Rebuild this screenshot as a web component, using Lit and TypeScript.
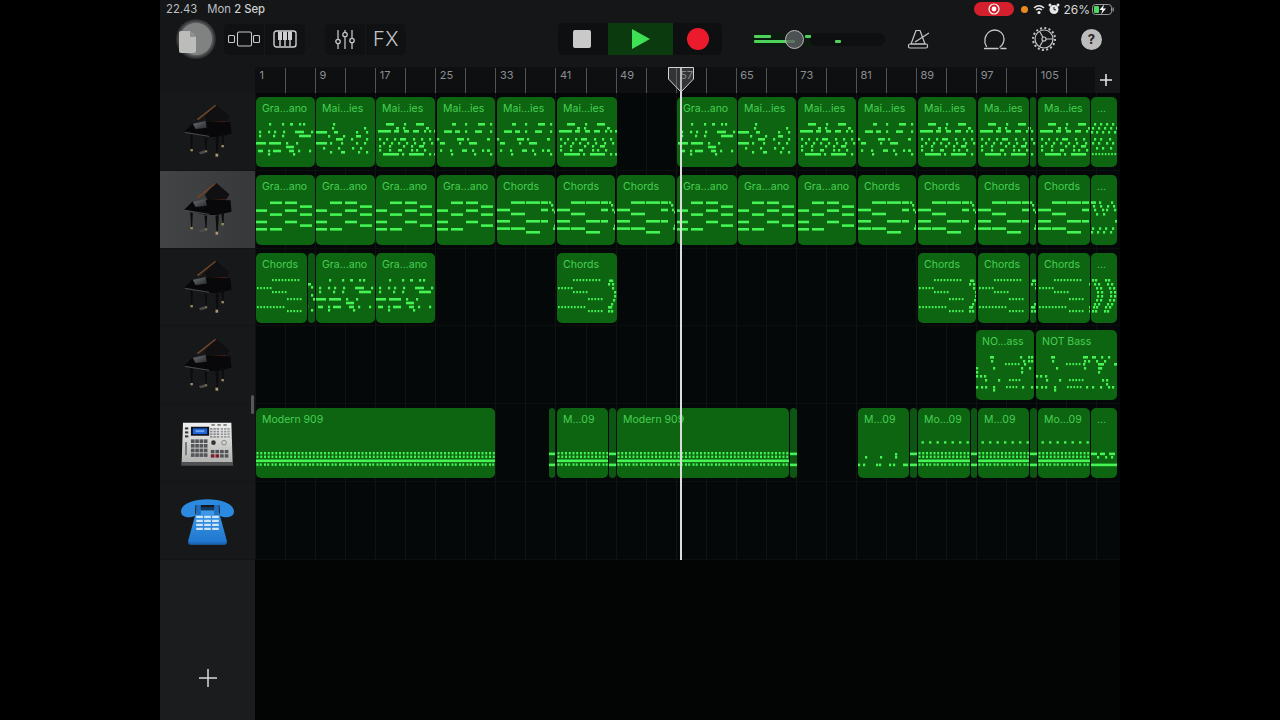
import { LitElement, html, css, svg } from "lit";
import { customElement } from "lit/decorators.js";

type Note = { x: number; y: number; w: number; h: number };
const H = 2.6;

// "10-18 28 40-48" => dash from 10 to 18, single dots at 28, dash 40 to 48
function row(y: number, spec: string, h = H, dot = 2.2): Note[] {
  return spec.split(" ").filter(Boolean).map((s) => {
    const [a, b] = s.split("-").map(Number);
    return { x: a, y, w: b === undefined ? dot : b - a, h };
  });
}
function dotted(y: number, a: number, b: number, step = 3.2): Note[] {
  const out: Note[] = [];
  for (let x = a; x < b; x += step) out.push({ x, y, w: 1.7, h: 2.2 });
  return out;
}
const P: Record<string, Note[]> = {
  gra: [
    ...row(26.5, "14-26 29-41"), ...row(30.3, "44-56"), ...row(34.3, "0-11 29-41"),
    ...row(38.3, "14-26 44-56"), ...row(45.7, "0-11 29-41"), ...row(49.3, "44-56"), ...row(53, "0-11 14-26"),
  ],
  chords: [
    ...row(26.3, "14-28 29-43 44-51 52"), ...row(29, "54"), ...row(33.7, "0-13 44-51 55"), ...row(36, "57"),
    ...row(37.7, "14-28"), ...row(45, "0-13 29-43 44-51"), ...row(49.5, "57"), ...row(52.3, "0-13 14-28 56"),
    ...row(56, "29-43 58"),
  ],
  chordsEnd: [...row(26.3, "0-5 8 20"), ...row(30, "2 9 16 22"), ...row(33.7, "3 11 15 23"), ...row(38, "5 12"), ...row(45, "24"), ...row(52.3, "1 8 14 21"), ...row(56, "0 6 12 19")],
  dots: [
    ...dotted(26, 16, 44), ...dotted(34, 1, 14), ...dotted(38, 16, 29), ...dotted(45, 31, 44),
    ...dotted(53, 1, 29), ...dotted(57, 31, 44),
    ...row(26.5, "54 52"), ...row(30, "51 55"), ...row(34, "55"), ...row(38, "57"), ...row(42, "57"), ...row(46, "56"), ...row(50, "54"), ...row(53, "53 51"), ...row(57, "51 54"),
  ],
  dotsEnd: [
    ...row(26, "1 4 14 17"), ...row(30, "3 7 16 20"), ...row(34, "5 9 18 22"), ...row(38, "6 10 19 23"), ...row(42, "6 10 19 23"),
    ...row(46, "5 9 18 22"), ...row(50, "3 7 16 20"), ...row(53, "2 5 14 18"), ...row(57, "1 4 13 16"),
  ],
  graD: [
    ...row(26, "13 26 34-37 43 47"), ...row(33.7, "3 12 18 27 39-48 55"), ...row(37.7, "3 17 26 43-55"),
    ...row(45, "0-10 13-25 30 40"), ...row(48.7, "30-38"), ...row(52.7, "2-7 12 17-25 33-38 42 53"), ...row(56, "12 37"),
  ],
  mai1: [
    ...row(26, "15-19 28 41-48 53"), ...row(33.3, "7-15 18-23 28 38-45 53 58"), ...row(41, "0 20-27 30 50-53"),
    ...row(45, "3-8 22 32-40"), ...row(52.3, "3 13 25-30 35 45 50-53"), ...row(56, "14 37 53"),
  ],
  mai2: [
    ...row(26, "10-18 28 40-48"), ...row(30, "20-23 27 50-53"), ...row(33, "2-15 18-23 28-33 37-43 48 53 58"),
    ...row(41, "3 10 18 24-30 37 45 53"), ...row(45, "7 15 22 30 38 47 55"), ...row(48, "3 13 27 35 43-48"),
    ...row(52, "3 13 22-26 35 40 48"), ...row(56, "7-23 26 33-48 53 58"),
  ],
  mai3: [
    ...row(26, "17"), ...row(30, "16 48"), ...row(34, "0-11 18-22 40 50"), ...row(38, "12 27 40-45"),
    ...row(41, "20-27 35 50"), ...row(45, "0-11 14 25 40 48"), ...row(50, "7 22 36 44"), ...row(54, "14 25-29 42 50"),
  ],
  maiEnd: [
    ...row(26, "3 9 15 21"), ...row(30, "1 7 13 19 25"), ...row(34, "0 5 11 17 23"), ...row(41, "3 9 18"),
    ...row(45, "1 7 15 21"), ...row(50, "5 11 19"), ...dotted(56, 1, 25),
  ],
  bass1: [
    ...row(26, "14-18 44 52 55"), ...row(30, "15 47 52 55"), ...dotted(33, 29, 45), ...row(33, "48"), ...row(37, "0 17 45 53 58"),
    ...row(41, "0 45"), ...row(45, "0 4 8"), ...row(49, "9 22"), ...dotted(49, 33, 45), ...row(56, "0 5 9 17 46 55"), ...dotted(56, 30, 42), ...row(59, "17"),
  ],
  bass2: [
    ...row(26, "15-19 47-52 56-60 65 72"), ...row(30, "16 48 52 60 68"), ...dotted(33, 30, 44), ...row(33, "47 62-68 78-81"), ...row(37, "20 48 62 64"),
    ...row(41, "62"), ...row(45, "0 4 9"), ...row(49, "10 23 66 70"), ...dotted(49, 33, 46), ...row(53, "70"),
    ...row(56, "0 5 9 18 50 56 64 72 76"), ...dotted(56, 31, 44), ...row(59, "18"),
  ],
};
function drums(w: number, top = false, lo = true): Note[] {
  const out: Note[] = [];
  for (let x = 0.5; x < w; x += 3.75) {
    out.push({ x, y: 44, w: 2, h: 2.4 }, { x, y: 47.6, w: 2, h: 2.4 });
  }
  for (let x = 0.5; x < w; x += 7.5) {
    if (lo) out.push({ x, y: 55.4, w: 2, h: 2.4 }, { x: x + 3.2, y: 55.4, w: 2, h: 2.4 });
    if (top) out.push({ x: x + 3, y: 33.2, w: 2.4, h: 2.4 });
  }
  out.push({ x: 0, y: 51.5, w, h: 2.6 });
  return out;
}
P.dash = [...row(44.6, "0-9"), ...row(55.6, "0-9")];
P.sparse = [...row(48, "7 22 37"), ...row(45, "37"), ...row(55.6, "0 5 18 21 31 35 45-50")];
P.endDrum = [...row(44.6, "0-6 9-14 18-24"), ...row(48, "6 14 20"), ...row(55.6, "0-26")];

type R = [number, number, string, string, number?];
const TRACKS: { icon: string; sel?: boolean; regions: R[] }[] = [
  { icon: "piano", regions: [
    [256, 315, "Gra...ano", "graD"], [316, 375, "Mai...ies", "mai3"], [376, 435, "Mai...ies", "mai2"],
    [437, 495, "Mai...ies", "mai1"], [497, 555, "Mai...ies", "mai1"], [557, 617, "Mai...ies", "mai2"],
    [677, 737, "Gra...ano", "graD", -1], [738, 796, "Mai...ies", "mai3"], [798, 856, "Mai...ies", "mai2"],
    [858, 916, "Mai...ies", "mai1"], [918, 976, "Mai...ies", "mai2"], [978, 1029, "Ma...ies", "mai2"],
    [1030, 1036, "", "mai2", 52], [1038, 1090, "Ma...ies", "mai2"], [1091, 1117, "...", "maiEnd"],
  ] },
  { icon: "piano", sel: true, regions: [
    [256, 315, "Gra...ano", "gra"], [316, 375, "Gra...ano", "gra"], [376, 435, "Gra...ano", "gra"],
    [437, 495, "Gra...ano", "gra"], [497, 555, "Chords", "chords"], [557, 615, "Chords", "chords"],
    [617, 675, "Chords", "chords"], [677, 737, "Gra...ano", "gra"], [738, 796, "Gra...ano", "gra"],
    [798, 856, "Gra...ano", "gra"], [858, 916, "Chords", "chords"], [918, 976, "Chords", "chords"],
    [978, 1029, "Chords", "chords"], [1030, 1036, "", "chords", 52], [1038, 1090, "Chords", "chords"], [1091, 1117, "...", "chordsEnd"],
  ] },
  { icon: "piano", regions: [
    [256, 307, "Chords", "dots"], [308, 315, "", "mai2", 50], [316, 375, "Gra...ano", "graD"], [376, 435, "Gra...ano", "graD"],
    [557, 617, "Chords", "dots"], [918, 976, "Chords", "dots"], [978, 1029, "Chords", "dots"], [1030, 1036, "", "dots", 50],
    [1038, 1090, "Chords", "dots"], [1091, 1117, "...", "dotsEnd"],
  ] },
  { icon: "piano", regions: [[976, 1034, "NO...ass", "bass1"], [1036, 1117, "NOT Bass", "bass2"]] },
  { icon: "mpc", regions: [
    [256, 495, "Modern 909", "d"], [549, 555, "", "dash"], [557, 608, "M...09", "d"], [609, 616, "", "dash"],
    [617, 789, "Modern 909", "d"], [790, 797, "", "dash"], [858, 909, "M...09", "sparse"], [910, 917, "", "dash"],
    [918, 970, "Mo...09", "dt"], [971, 977, "", "dash"], [978, 1029, "M...09", "dt"], [1030, 1037, "", "dash"],
    [1038, 1090, "Mo...09", "dt"], [1091, 1117, "...", "endDrum"],
  ] },
  { icon: "phone", regions: [] },
];

const PIANO = svg`<svg class="ic-piano" viewBox="60 310 155 168">
  <defs><linearGradient id="pk" x1="0" y1="0" x2="1" y2="1"><stop offset="0" stop-color="#6c7074"/><stop offset="1" stop-color="#26282a"/></linearGradient></defs>
  <path d="M160 314 L202 350 L188 372 L140 372 L128 352 Z" fill="#101012"/>
  <path d="M104 358 L159 315 L162 318 L108 362 Z" fill="#6e4426"/>
  <path d="M130 368 L192 364 L190 376 L140 380 Z" fill="#4c1e14"/>
  <path d="M66 396 L90 372 L130 366 L205 368 L208 402 L165 412 L130 412 Z" fill="#08080a"/>
  <path d="M92 372 L130 364 L134 384 L100 388 Z" fill="url(#pk)"/>
  <path d="M68 396 L140 408 L142 412 L68 400 Z" fill="#44474b"/>
  <path d="M84 404 L92 406 L90 448 L87 448 Z" fill="#0c0c0d"/>
  <path d="M127 414 L135 414 L133 452 L130 452 Z" fill="#0c0c0d"/>
  <path d="M160 414 L170 412 L167 462 L163 462 Z" fill="#0c0c0d"/>
  <path d="M177 402 L186 400 L184 436 L181 436 Z" fill="#0c0c0d"/>
  <rect x="85" y="448" width="7" height="7" fill="#a08e60"/><rect x="128" y="452" width="7" height="6" fill="#8a7a55"/>
  <rect x="160" y="462" width="8" height="9" fill="#a89a70"/><rect x="178" y="436" width="7" height="7" fill="#a08e60"/>
  <path d="M110 458 L128 452 L130 460 L115 464 Z" fill="#4c4c48"/>
</svg>`;

const MPC = svg`<svg class="ic-mpc" viewBox="0 0 160 132">
  <defs><linearGradient id="mb" x1="0" y1="0" x2="0" y2="1"><stop offset="0" stop-color="#f0f0ee"/><stop offset="1" stop-color="#b0b0ae"/></linearGradient></defs>
  <path d="M6 2 H152 L156 124 H2 Z" fill="url(#mb)"/>
  <path d="M2 120 H156 L158 132 H0 Z" fill="#4e5053"/>
  <rect x="30" y="14" width="55" height="27" fill="#0e1220"/><rect x="36" y="19" width="43" height="17" fill="#1f66dc"/>
  <rect x="44" y="24" width="26" height="6" fill="#6fa0ec"/>
  <rect x="12" y="16" width="10" height="6" fill="#333"/><rect x="12" y="28" width="10" height="6" fill="#333"/><rect x="12" y="40" width="10" height="6" fill="#333"/>
  ${[0, 1, 2, 3].flatMap((r) => [0, 1, 2, 3].map((c) => svg`<rect x=${30 + c * 13} y=${52 + r * 14} width="11" height="11" fill="#55585b"/>`))}
  ${[0, 1, 2, 3].flatMap((r) => [0, 1, 2].map((c) => svg`<rect x=${88 + c * 10} y=${18 + r * 8} width="7" height="5" fill="#85878a"/>`))}
  ${[0, 1, 2, 3].flatMap((r) => [0, 1, 2].map((c) => svg`<rect x=${120 + c * 10} y=${18 + r * 8} width="7" height="5" fill="#95979a"/>`))}
  ${[0, 1, 2].map((c) => svg`<rect x=${92 + c * 18} y="6" width="10" height="5" fill="#777"/>`)}
  <circle cx="98" cy="62" r="7" fill="#333"/><circle cx="130" cy="62" r="7" fill="none" stroke="#888" stroke-width="3"/>
  ${[0, 1].flatMap((r) => [0, 1, 2, 3].map((c) => svg`<rect x=${90 + c * 14} y=${84 + r * 13} width="11" height="10" fill=${r === 1 && c < 2 ? "#7a1c2a" : "#505356"}/>`))}
  <rect x="12" y="60" width="6" height="40" fill="#77797c"/>
</svg>`;

const PHONE = svg`<svg class="ic-phone" viewBox="0 0 160 138">
  <defs><linearGradient id="pb" x1="0" y1="0" x2="0" y2="1"><stop offset="0" stop-color="#3f9ceb"/><stop offset="1" stop-color="#1e74cc"/></linearGradient></defs>
  <path d="M48 30 H112 L138 124 Q140 137 128 137 H32 Q20 137 22 124 Z" fill="url(#pb)"/>
  <rect x="46" y="16" width="14" height="32" fill="#1f6fbc"/><rect x="100" y="16" width="14" height="32" fill="#1f6fbc"/>
  <rect x="60" y="24" width="40" height="10" fill="#123a66"/>
  <path d="M0 38 C0 12 40 0 80 0 C120 0 160 12 160 38 C160 56 130 58 118 50 L116 18 H44 L42 50 C30 58 0 56 0 38 Z" fill="#2b8ae0"/>
  ${[0, 1, 2, 3].flatMap((r) => [0, 1, 2].map((c) => svg`<rect x=${46 + c * 24} y=${50 + r * 12} width="20" height="7" rx="1" fill="#cfe4f5"/>`))}
  <path d="M22 130 H138 L136 137 H24 Z" fill="#1a66b4"/>
</svg>`;

const icons: Record<string, unknown> = { piano: PIANO, mpc: MPC, phone: PHONE };

@customElement("app-root")
export class AppRoot extends LitElement {
  static styles = css`
    :host { display: block; width: 1280px; height: 720px; background: #000; font-family: Inter, "Liberation Sans", sans-serif; overflow: hidden; }
    .app { width: 960px; height: 720px; margin-left: 160px; display: flex; flex-direction: column; background: #141618; position: relative; }

    .status { height: 18px; display: flex; align-items: center; padding: 0 6px 0 6px; color: #bdbfc0; font-size: 11.3px; }
    .date { margin-left: 10px; }
    .date b { font-weight: 500; color: #d0d0d0; }
    .status .right { margin-left: auto; display: flex; align-items: center; }
    .rec { width: 40px; height: 14px; border-radius: 7px; background: #d3202c; display: flex; align-items: center; justify-content: center; }
    .orange { width: 7px; height: 7px; border-radius: 50%; background: #e98a1e; margin-left: 7px; }
    .pct { color: #d8d8d8; font-size: 12px; margin-left: 3px; }
    .st-ic { margin-left: 5px; display: block; }
    .st-al { margin-left: 3px; display: block; }
    .batt { margin-left: 2px; display: block; }

    .toolbar { height: 49px; box-sizing: border-box; padding: 0 0 7px 18px; display: flex; align-items: center; }
    .doc { width: 36px; height: 36px; position: relative; flex: none; }
    .doc .halo { width: 40px; height: 40px; margin: -2px; border-radius: 50%; background: radial-gradient(closest-side, #7f8281 0 78%, #5a5d5f 82%, #3a3c3e 92%, #26282a 100%); }
    .doc svg { position: absolute; left: 1px; top: 10px; }
    .seg { display: flex; height: 31px; background: #0f1113; border-radius: 5px; flex: none; }
    .seg > div { width: 40px; display: flex; align-items: center; justify-content: center; }
    .seg > div + div { border-left: 1px solid #18191b; }
    .g1 { margin-left: 10px; } .g2 { margin-left: 20px; }
    .fx { color: #c4c4c4; font-size: 20px; font-weight: 300; letter-spacing: 0.5px; }
    .transport { margin-left: 152px; width: 164px; height: 32px; display: flex; border-radius: 5px; background: #0d0f11; flex: none; }
    .transport > div { display: flex; align-items: center; justify-content: center; }
    .t1 { width: 50px; box-sizing: border-box; padding-right: 2px; } .t2 { width: 65px; background: #0b3a0e; } .t3 { width: 49px; }
    .stop { width: 18px; height: 18px; background: #c9c9c9; border-radius: 2px; }
    .record { width: 22px; height: 22px; border-radius: 50%; background: #ec1a2d; }
    .vol { margin-left: 30px; width: 133px; height: 13px; border-radius: 7px; background: #0d1a10; position: relative; flex: none; }
    .vol .dark { position: absolute; left: 58px; right: 0; top: 0; bottom: 0; background: #0d0f11; border-radius: 7px; }
    .vol i { position: absolute; background: #4fd25c; height: 3px; border-radius: 1px; }
    .knob { position: absolute; left: 32.5px; top: -3px; width: 17px; height: 17px; border-radius: 50%; background: rgba(92, 96, 98, 0.8); border: 1px solid #b8b8b8; }
    .metro { margin-left: 22px; } .loop { margin-left: 52px; } .gear { margin-left: 25px; }
    .help { margin-left: 25px; width: 21px; height: 21px; border-radius: 50%; background: #bcbcbc; color: #222; font-size: 13px; font-weight: 700; display: flex; align-items: center; justify-content: center; flex: none; }
    .toolbar svg { display: block; flex: none; }

    .arrange { flex: 1; display: flex; flex-direction: column; position: relative; }
    .ruler { height: 26px; display: flex; flex: none; }
    .ruler .blank { width: 95px; flex: none; }
    .ticks { flex: 1; display: grid; grid-template-columns: repeat(28, 30.05px); background: #0d0f11; overflow: hidden; padding-top: 1px; box-sizing: border-box; }
    .tick { border-left: 1.5px solid #505254; box-sizing: border-box; color: #8c8e90; font-size: 11px; line-height: 14px; padding-left: 3.5px; white-space: nowrap; }
    .tick.first { border-left-color: transparent; }
    .add-bar { width: 25px; flex: none; background: #141618; color: #e4e4e4; display: flex; align-items: center; justify-content: center; box-sizing: border-box; padding-right: 3px; }
    .track { display: flex; height: 77.83px; flex: none; }
    .head { width: 95px; flex: none; background: #16181a; display: flex; align-items: center; justify-content: center; box-sizing: border-box; border-bottom: 1px solid #121416; }
    .track.sel .head { background: linear-gradient(90deg, #424446, #36383a); }
    .lane { flex: 1; position: relative; box-sizing: border-box; border-bottom: 1px solid #0c0f0e; background-color: #050808; background-image: repeating-linear-gradient(90deg, #101312 0 1px, transparent 1px 30.05px); }
    .region { position: absolute; top: 4px; height: 70px; background: #0d6411; border-radius: 5px; overflow: hidden; color: #46d052; font-size: 10.5px; line-height: 14px; padding: 5px 0 0 6px; box-sizing: border-box; white-space: nowrap; }
    .region.thin { background: #0c5512; }
    .region svg { position: absolute; left: 0; top: 0; width: 100%; height: 100%; }
    .ic-piano { width: 52px; height: 56px; }
    .ic-mpc { width: 53px; height: 44px; margin-top: 3px; }
    .ic-phone { width: 53px; height: 46px; margin-top: 2px; }
    .rest { flex: 1; display: flex; }
    .rest .head { border: 0; padding-top: 76px; background: #1a1c1e; }
    .rest .fill { flex: 1; background: #030504; }
    .scroll { position: absolute; left: 90.5px; top: 328px; width: 3px; height: 19px; border-radius: 2px; background: #55585a; }
    .playline { position: absolute; left: 520.2px; top: 0; width: 1.6px; height: 493px; background: #dcdcdc; }
    .playhead { position: absolute; left: 508px; top: 0; display: block; }
  `;

  private notes(r: R, w: number) {
    const [, , , key, off = 0] = r;
    const list = key === "d" ? drums(w) : key === "dt" ? drums(w, true) : P[key];
    return svg`<svg viewBox="0 0 ${w} 70" preserveAspectRatio="none">${list.map((n) =>
      svg`<rect x=${n.x - off} y=${n.y} width=${n.w} height=${n.h} fill="#44f454"/>`)}</svg>`;
  }

  private region(r: R) {
    const w = r[1] - r[0];
    return html`<div class="region ${r[2] ? "" : "thin"}" style="left:${r[0] - 255}px;width:${w}px">
      ${r[2]}${this.notes(r, w)}</div>`;
  }

  render() {
    const ticks = Array.from({ length: 28 }, (_, i) => i);
    return html`<div class="app">
      <div class="status">
        <span>22.43</span><span class="date">Mon <b>2 Sep</b></span>
        <div class="right">
          <div class="rec"><svg width="12" height="12" viewBox="0 0 12 12"><circle cx="6" cy="6" r="5" fill="none" stroke="#fff" stroke-width="1.2"/><circle cx="6" cy="6" r="2.4" fill="#fff"/></svg></div>
          <div class="orange"></div>
          <svg class="st-ic" width="12" height="10" viewBox="0 0 12 10" fill="none" stroke="#e8e8e8" stroke-width="1.6"><path d="M1 4 Q6 -0.5 11 4"/><path d="M3 6 Q6 3.5 9 6"/><circle cx="6" cy="8.5" r="0.8" fill="#e8e8e8"/></svg>
          <svg class="st-al" width="12" height="12" viewBox="0 0 12 12"><circle cx="6" cy="6.5" r="4.5" fill="#e6e6e6"/><path d="M6 4 V6.8 H8" stroke="#222" fill="none"/><circle cx="2" cy="2" r="1.5" fill="#e6e6e6"/><circle cx="10" cy="2" r="1.5" fill="#e6e6e6"/></svg>
          <span class="pct">26%</span>
          <svg class="batt" width="22" height="11" viewBox="0 0 22 11"><rect x="0.5" y="0.5" width="19" height="10" rx="3" fill="none" stroke="#999"/><rect x="2" y="2" width="5" height="7" rx="1" fill="#4cd964"/><path d="M12 0.5 L7.5 6 H10.5 L9 10.5 L14 4.5 H11 Z" fill="#fff"/><rect x="20.5" y="3.5" width="1.3" height="4" fill="#999"/></svg>
        </div>
      </div>

      <div class="toolbar">
        <div class="doc"><div class="halo"></div>
          <svg width="18" height="22" viewBox="0 0 18 22"><path d="M2 0 H11 L17 6 V20 Q17 22 15 22 H2 Q0 22 0 20 V2 Q0 0 2 0 Z" fill="#bcbdbb"/><path d="M11 0 V6 H17 Z" fill="#8e908e"/></svg>
        </div>
        <div class="seg g1">
          <div><svg width="32" height="16" viewBox="0 0 32 16" fill="none" stroke="#c8c8c8" stroke-width="1.1"><rect x="0.5" y="4.5" width="6" height="7" rx="1"/><rect x="9.5" y="1" width="14" height="14" rx="1.5"/><rect x="25.5" y="4.5" width="6" height="7" rx="1"/></svg></div>
          <div><svg width="24" height="18" viewBox="0 0 24 18"><rect x="1" y="1" width="22" height="16" rx="2.5" fill="none" stroke="#cfcfcf" stroke-width="1.4"/><path d="M7 2 V16 M12 2 V16 M17 2 V16" stroke="#cfcfcf" stroke-width="1.4"/><path d="M5 1.5 H9 V10 H5 Z M10 1.5 H14 V10 H10 Z M15 1.5 H19 V10 H15 Z" fill="#cfcfcf"/></svg></div>
        </div>
        <div class="seg g2">
          <div><svg width="20" height="19" viewBox="0 0 20 19" fill="none" stroke="#c4c4c4" stroke-width="1.3"><path d="M3 0 V9 M3 14 V19 M10 0 V2 M10 7 V19 M17 0 V8 M17 13 V19"/><circle cx="3" cy="11.5" r="2.2"/><circle cx="10" cy="4.5" r="2.2"/><circle cx="17" cy="10.5" r="2.2"/></svg></div>
          <div><span class="fx">FX</span></div>
        </div>
        <div class="transport">
          <div class="t1"><div class="stop"></div></div>
          <div class="t2"><svg width="18" height="20" viewBox="0 0 18 20"><path d="M0 0 L18 10 L0 20 Z" fill="#3ee054"/></svg></div>
          <div class="t3"><div class="record"></div></div>
        </div>
        <div class="vol">
          <div class="dark"></div>
          <i style="left:2px;top:2px;width:17px"></i>
          <i style="left:2px;top:7px;width:41px"></i>
          <i style="left:53px;top:2px;width:6px"></i>
          <i style="left:83px;top:7px;width:6px"></i>
          <div class="knob"></div>
        </div>
        <svg class="metro" width="24" height="20" viewBox="0 0 24 20" fill="none" stroke="#c6c6c6" stroke-width="1.2" stroke-linejoin="round"><path d="M4 15 L9 1.5 H13 L18 15 Z"/><rect x="1.5" y="15" width="19" height="4" rx="1.5"/><path d="M8 13 L22 4"/></svg>
        <svg class="loop" width="24" height="21" viewBox="0 0 24 21" fill="none" stroke="#c8c8c8" stroke-width="1.3" stroke-linecap="round"><path d="M3.5 17.5 C2 15 1.5 12 2 9.5 C3 4.5 7 1 11.5 1 C17 1 21 5 21 10 C21 13.5 19.5 16 17 18"/><path d="M1.5 19.5 H15 M18 19.5 H23"/></svg>
        <svg class="gear" width="24" height="24" viewBox="0 0 24 24" fill="none" stroke="#c4c4c4" stroke-width="1.2"><circle cx="12" cy="12" r="9"/><circle cx="12" cy="12" r="11" stroke-dasharray="2 2.32" stroke-width="2"/><circle cx="12" cy="12" r="2"/><path d="M14 12 H21 M11 10.3 L7.5 4.3 M11 13.7 L7.5 19.7"/></svg>
        <div class="help">?</div>
      </div>

      <div class="arrange">
        <div class="ruler">
          <div class="blank"></div>
          <div class="ticks">${ticks.map((i) => html`<div class="tick ${i === 0 ? "first" : ""}">${i % 2 === 0 ? 1 + i * 4 : ""}</div>`)}</div>
          <div class="add-bar"><svg width="12" height="12" viewBox="0 0 12 12"><path d="M6 0 V12 M0 6 H12" stroke="#e4e4e4" stroke-width="1.6"/></svg></div>
        </div>
        ${TRACKS.map((t) => html`<div class="track ${t.sel ? "sel" : ""}">
          <div class="head">${icons[t.icon]}</div>
          <div class="lane">${t.regions.map((r) => this.region(r))}</div>
        </div>`)}
        <div class="rest">
          <div class="head"><svg width="20" height="20" viewBox="0 0 20 20"><path d="M10 1 V19 M1 10 H19" stroke="#d8d8d8" stroke-width="1.5"/></svg></div>
          <div class="fill"></div>
        </div>
        <div class="scroll"></div>
        <div class="playline"></div>
        <svg class="playhead" width="26" height="26" viewBox="0 0 26 26"><path d="M0.5 0.5 H25.5 V12 L13 25 L0.5 12 Z" fill="rgba(120,124,126,0.35)" stroke="#d4d4d4" stroke-width="1"/></svg>
      </div>
    </div>`;
  }
}
